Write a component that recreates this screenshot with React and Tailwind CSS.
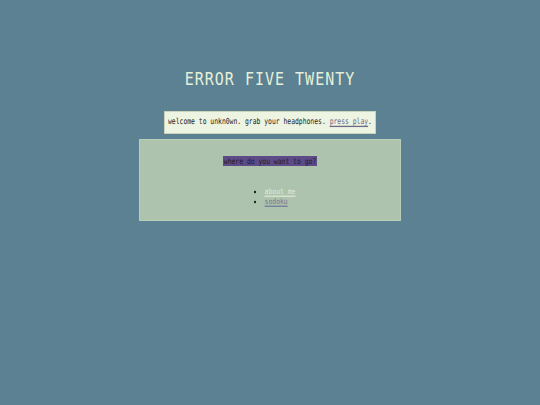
import React from "react";

const mono = { fontFamily: '"DejaVu Sans Mono", "Liberation Mono", monospace' };

const App = () => {
  return (
    <div
      className="min-h-screen w-full bg-[#5b8192] flex flex-col items-center pt-[69px]"
      style={mono}
    >
      <h1 className="text-[15px] leading-[20px] text-[#e6efd9] tracking-[1px] font-normal scale-y-[1.18] antialiased">
        ERROR FIVE TWENTY
      </h1>

      <div className="mt-[22px] bg-[#eef4e2] border border-[#c9d4bb] px-[3px] h-[23px] flex items-center">
        <p className="text-[6.4px] leading-[9px] text-[#222] scale-y-[1.3] antialiased">
          welcome to unkn0wn. grab your headphones.{" "}
          <a href="#" className="underline text-[#6b6b86]">
            press play
          </a>
          .
        </p>
      </div>

      <div className="mt-[5px] w-[262px] h-[82px] bg-[#adc3ad] border border-[#b9cdb8] flex flex-col items-center pt-[17px] antialiased">
        <span className="block bg-[#5d4b88] text-[#1d1b2b] text-[6.4px] leading-[8px] px-[1px] scale-y-[1.25]">
          where do you want to go?
        </span>
        <ul className="mt-[22px] list-disc pl-[6px] text-[6.4px] leading-[10px] text-[#111] ml-[14px]">
          <li className="scale-y-[1.2]">
            <a href="#" className="underline text-[#e2ead6]">
              about me
            </a>
          </li>
          <li className="scale-y-[1.2]">
            <a href="#" className="underline text-[#6f7596]">
              sodoku
            </a>
          </li>
        </ul>
      </div>
    </div>
  );
};

export default App;
